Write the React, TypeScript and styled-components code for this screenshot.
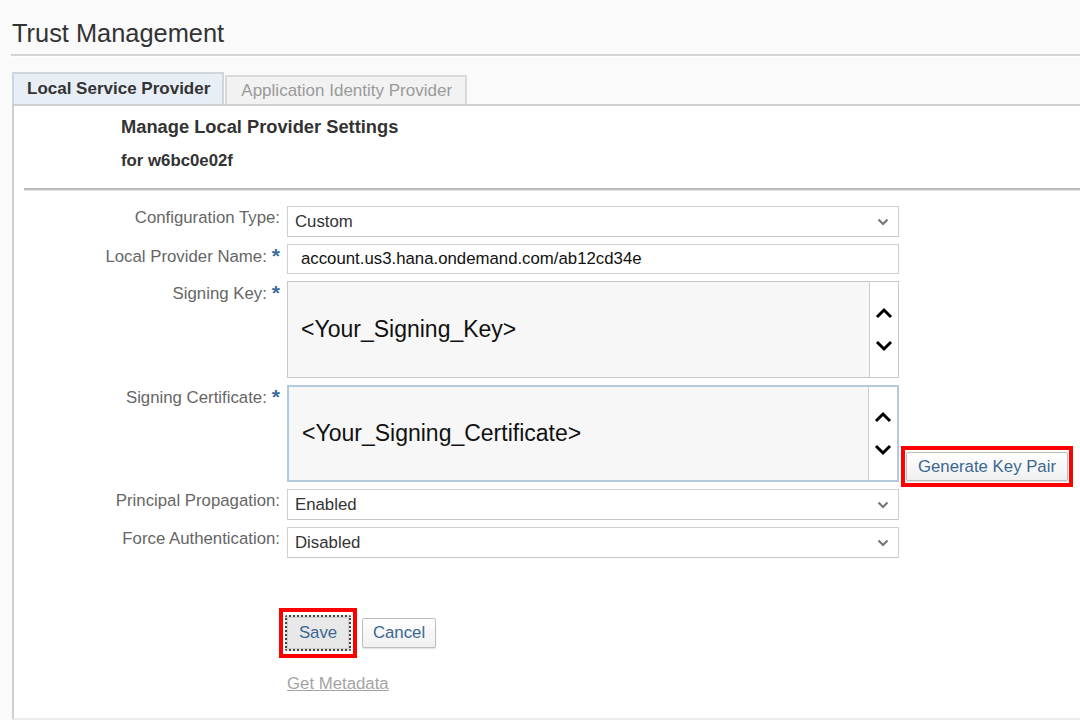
import React from "react";
import styled, { createGlobalStyle } from "styled-components";

const Global = createGlobalStyle`
  html, body { margin: 0; padding: 0; background: #fafafa; }
  body { font-family: "Liberation Sans", Arial, sans-serif; width: 1080px; height: 720px; overflow: hidden; }
  * { box-sizing: border-box; }
`;

const Page = styled.div`
  padding-left: 11px;
  height: 720px;
  display: flex;
  flex-direction: column;
`;

const Title = styled.h1`
  margin: 0;
  height: 56px;
  padding: 12px 0 0 1px;
  font-size: 25.4px;
  font-weight: normal;
  color: #333;
  line-height: 42px;
  border-bottom: 2px solid #d4d4d4;
  box-shadow: 0 1px 0 #fff;
`;

const TabStrip = styled.div`
  display: flex;
  align-items: flex-end;
  margin-top: 16px;
  padding-left: 1px;
  height: 32px;
`;

const Tab = styled.div<{ $active?: boolean }>`
  height: ${(p) => (p.$active ? 32 : 29)}px;
  padding: 0 ${(p) => (p.$active ? 12 : 13)}px 0 ${(p) => (p.$active ? 13 : 14)}px;
  display: flex;
  align-items: center;
  font-size: 17px;
  font-weight: ${(p) => (p.$active ? "bold" : "normal")};
  color: ${(p) => (p.$active ? "#333" : "#9a9a9a")};
  background: ${(p) => (p.$active ? "#e8eef6" : "#f2f2f2")};
  border: 2px solid ${(p) => (p.$active ? "#d2d6da" : "#dadada")};
  border-bottom: none;
  margin-right: 1px;
`;

const Panel = styled.div`
  flex: 1;
  margin-left: 1px;
  background: #fff;
  border-top: 2px solid #cfcfcf;
  border-left: 2px solid #d0d0d0;
  border-bottom: 2px solid #ececec;
  display: flex;
  flex-direction: column;
`;

const Header = styled.div`
  padding: 11px 0 0 107px;
  color: #333;
  font-weight: bold;
`;

const HeaderLine = styled.div<{ $size: number; $gap?: number }>`
  font-size: ${(p) => p.$size}px;
  line-height: 19px;
  margin-top: ${(p) => p.$gap ?? 0}px;
`;

const Divider = styled.div`
  margin: 18px 0 0 10px;
  height: 3px;
  border-top: 2px solid #bdbdbd;
  border-bottom: 1px solid #e4e4e4;
`;

const Form = styled.div`
  margin-top: 15px;
  display: grid;
  grid-template-columns: 273px 612px auto;
  row-gap: 7px;
  align-items: start;
`;

const Label = styled.div`
  grid-column: 1;
  text-align: right;
  padding-right: 7px;
  padding-top: 2px;
  font-size: 16.8px;
  line-height: 20px;
  color: #666;
  white-space: nowrap;
`;

const Req = styled.span`
  color: #3a6d98;
  font-weight: bold;
  font-size: 21px;
  margin-left: 5px;
  vertical-align: -1px;
`;

const Select = styled.div`
  grid-column: 2;
  height: 31px;
  border: 1px solid #cfcfcf;
  border-bottom-color: #c6c6c6;
  background: #fff;
  display: flex;
  align-items: center;
  justify-content: space-between;
  padding: 0 9px 0 7px;
  font-size: 16.8px;
  color: #333;
`;

const TextInput = styled.div`
  grid-column: 2;
  height: 30px;
  border: 1px solid #cfcfcf;
  background: #fff;
  display: flex;
  align-items: center;
  padding: 0 13px;
  font-size: 16.8px;
  color: #111;
`;

const TextArea = styled.div<{ $focus?: boolean; $h: number }>`
  grid-column: 2;
  height: ${(p) => p.$h}px;
  border: ${(p) => (p.$focus ? "2px solid #b4cadd" : "1px solid #c8c8c8")};
  display: flex;
  background: #f7f7f7;
`;

const AreaText = styled.div`
  flex: 1;
  display: flex;
  align-items: center;
  padding-left: 13px;
  font-size: 23px;
  color: #111;
`;

const ScrollCol = styled.div`
  width: 29px;
  border-left: 1px solid #cdcdcd;
  background: #fff;
  display: flex;
  flex-direction: column;
  align-items: center;
  justify-content: center;
  gap: 21px;
`;

const Highlight = styled.div<{ $pad: string }>`
  border: 4px solid #ff0000;
  padding: ${(p) => p.$pad};
  background: #fff;
  display: flex;
`;

const KeyCell = styled.div`
  grid-column: 3;
  align-self: end;
  margin: 0 0 -5px 2px;
  display: flex;
`;

const Button = styled.button<{ $focused?: boolean; $h: number; $w: number }>`
  width: ${(p) => p.$w}px;
  height: ${(p) => p.$h}px;
  font-family: inherit;
  font-size: 16.8px;
  color: #3b6791;
  background: ${(p) => (p.$focused ? "#e8e8e8" : "linear-gradient(#ffffff, #f0f0f0)")};
  border: ${(p) => (p.$focused ? "2px dotted #444" : "1px solid #bdbdbd")};
  border-radius: 2px;
  box-shadow: ${(p) => (p.$focused ? "inset 0 0 0 1px #cfcfcf" : "0 1px 1px rgba(0,0,0,0.12)")};
  padding: 0;
  cursor: pointer;
`;

const Actions = styled.div`
  margin: 50px 0 0 265px;
  display: flex;
  align-items: center;
  gap: 5px;
`;

const Link = styled.a`
  margin: 16px 0 0 273px;
  font-size: 16.8px;
  color: #a4a4a4;
  text-decoration: underline;
`;

const Chevron = () => (
  <svg width="12" height="8" viewBox="0 0 12 8">
    <polyline points="1.5,1.5 6,6 10.5,1.5" fill="none" stroke="#777" strokeWidth="2.2" />
  </svg>
);

const Arrow = ({ up }: { up?: boolean }) => (
  <svg width="18" height="12" viewBox="0 0 18 12">
    <polyline
      points={up ? "2,10 9,3 16,10" : "2,2 9,9 16,2"}
      fill="none"
      stroke="#000"
      strokeWidth="3"
    />
  </svg>
);

export default function App() {
  return (
    <>
      <Global />
      <Page>
        <Title>Trust Management</Title>
        <TabStrip>
          <Tab $active>Local Service Provider</Tab>
          <Tab>Application Identity Provider</Tab>
        </TabStrip>
        <Panel>
          <Header>
            <HeaderLine $size={18.3}>Manage Local Provider Settings</HeaderLine>
            <HeaderLine $size={16.8} $gap={15}>for w6bc0e02f</HeaderLine>
          </Header>
          <Divider />
          <Form>
            <Label>Configuration Type:</Label>
            <Select>
              <span>Custom</span>
              <Chevron />
            </Select>

            <Label>
              Local Provider Name:<Req>*</Req>
            </Label>
            <TextInput>account.us3.hana.ondemand.com/ab12cd34e</TextInput>

            <Label>
              Signing Key:<Req>*</Req>
            </Label>
            <TextArea $h={97}>
              <AreaText>&lt;Your_Signing_Key&gt;</AreaText>
              <ScrollCol>
                <Arrow up />
                <Arrow />
              </ScrollCol>
            </TextArea>

            <Label>
              Signing Certificate:<Req>*</Req>
            </Label>
            <TextArea $h={97} $focus>
              <AreaText>&lt;Your_Signing_Certificate&gt;</AreaText>
              <ScrollCol>
                <Arrow up />
                <Arrow />
              </ScrollCol>
            </TextArea>
            <KeyCell>
              <Highlight $pad="2px 1px">
                <Button $w={162} $h={29}>Generate Key Pair</Button>
              </Highlight>
            </KeyCell>

            <Label>Principal Propagation:</Label>
            <Select>
              <span>Enabled</span>
              <Chevron />
            </Select>

            <Label>Force Authentication:</Label>
            <Select>
              <span>Disabled</span>
              <Chevron />
            </Select>
          </Form>
          <Actions>
            <Highlight $pad="3px 2px">
              <Button $focused $w={66} $h={36}>Save</Button>
            </Highlight>
            <Button $w={74} $h={30}>Cancel</Button>
          </Actions>
          <Link href="#">Get Metadata</Link>
        </Panel>
      </Page>
    </>
  );
}
